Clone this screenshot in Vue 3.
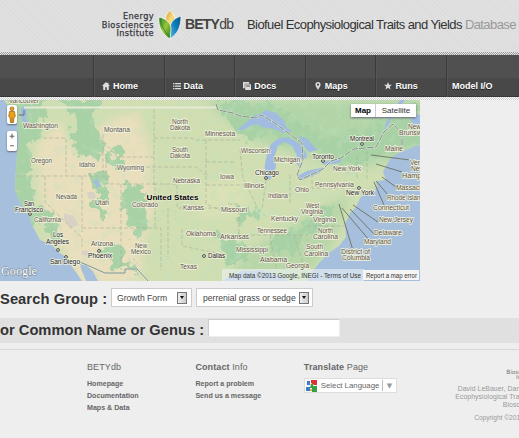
<script setup>
const nav = ['Home', 'Data', 'Docs', 'Maps', 'Runs', 'Model I/O']

// text, left x, baseline y, width
const states = [
  ['Vancouver', 9, 103, 30], ['Washington', 23, 128, 35], ['Montana', 104, 132, 26], ['Oregon', 31, 163, 21],
  ['Idaho', 79, 167, 16], ['Wyoming', 117, 170, 27], ['Nevada', 56, 199, 21], ['Utah', 95, 205, 14],
  ['Colorado', 132, 207, 26], ['California', 34, 222, 27], ['Arizona', 91, 246, 22],
  ['New', 135, 248, 12], ['Mexico', 131, 254, 20], ['North', 172, 124, 16], ['Dakota', 170, 130, 20],
  ['South', 172, 152, 16], ['Dakota', 170, 158, 20], ['Minnesota', 205, 136, 30], ['Wisconsin', 241, 153, 29],
  ['Nebraska', 173, 183, 27], ['Iowa', 220, 179, 14], ['Illinois', 244, 188, 20], ['Michigan', 274, 162, 26],
  ['Ohio', 295, 192, 14], ['Indiana', 268, 198, 20], ['Kansas', 183, 210, 21], ['Missouri', 221, 212, 26],
  ['Kentucky', 271, 221, 27], ['Tennessee', 257, 233, 30], ['Oklahoma', 186, 236, 30], ['Arkansas', 220, 239, 29],
  ['Mississippi', 236, 252, 32], ['Alabama', 260, 262, 27], ['Georgia', 286, 268, 23], ['Texas', 180, 269, 17],
  ['West', 306, 208, 13], ['Virginia', 301, 214, 22], ['Virginia', 313, 222, 23], ['North', 318, 233, 15],
  ['Carolina', 313, 239, 25], ['South', 306, 249, 17], ['Carolina', 304, 256, 24],
  ['Pennsylvania', 315, 187, 39], ['New York', 333, 171, 28], ['Maine', 385, 151, 18],
  ['New', 408, 129, 13], ['Brunswick', 399, 135, 31], ['Vermont', 410, 165, 25], ['New', 411, 171, 13],
  ['Hampshire', 402, 178, 35], ['Massachusetts', 396, 190, 45], ['Rhode Island', 387, 200, 37],
  ['Connecticut', 373, 210, 36], ['New Jersey', 379, 222, 34], ['Delaware', 374, 235, 28],
  ['Maryland', 364, 244, 27], ['District of', 341, 254, 29], ['Columbia', 342, 260, 28]
]
const cities = [
  ['San', 24, 206, 10], ['Francisco', 15, 212, 28], ['Los', 53, 237, 10], ['Angeles', 46, 244, 23],
  ['San Diego', 50, 264, 30], ['Phoenix', 88, 258, 24], ['Chicago', 255, 175, 24],
  ['Toronto', 312, 159, 22], ['Montreal', 350, 141, 24], ['Dallas', 208, 258, 17], ['New York', 346, 195, 28]
]
const dots = [[30, 214], [58, 250], [66, 257], [99, 251], [266, 178], [323, 161], [362, 144], [204, 256], [359, 188]]
</script>

<template>
  <main class="page">
    <header class="header">
      <div class="institute"><span>Energy</span><span class="bio">Biosciences</span><span>Institute</span></div>
      <svg class="logo" viewBox="0 0 24 30">
        <defs>
          <linearGradient id="gold" x1="0" y1="0" x2="1" y2="1"><stop stop-color="#d99a23"/><stop offset=".55" stop-color="#f8dd83"/><stop offset="1" stop-color="#d8a132"/></linearGradient>
          <linearGradient id="leaf" x1="0" y1="0" x2="1" y2="1"><stop stop-color="#277e32"/><stop offset=".5" stop-color="#9bc637"/><stop offset="1" stop-color="#28752c"/></linearGradient>
          <linearGradient id="blue" x1="0" y1="1" x2="1" y2="0"><stop stop-color="#5fb9df"/><stop offset=".5" stop-color="#1180be"/><stop offset="1" stop-color="#075583"/></linearGradient>
        </defs>
        <path d="M12 .5C8 4 7 8 8 11l4 7 5-8C17 6 15 3 12 .5Z" fill="url(#gold)" stroke="#fff" stroke-width=".7"/>
        <path d="M23 6c-6 2-10 5-11 11v12c7-5 11-11 11-23Z" fill="url(#blue)" stroke="#fff" stroke-width=".7"/>
        <path d="M1 7c8 2 12 6 12 12l-1 10C4 24 0 17 1 7Z" fill="url(#leaf)" stroke="#fff" stroke-width=".7"/>
        <path d="M2 9c2 8 5 13 10 18" fill="none" stroke="#2c8034" stroke-width=".8"/>
      </svg>
      <div class="brand"><b>BETY</b>db</div>
      <div class="title">Biofuel Ecophysiological Traits and Yields <span>Database</span></div>
    </header>
    <div class="dots top"></div>
    <nav class="nav">
      <a v-for="(item, i) in nav" :key="item">
        <svg v-if="i < 5" viewBox="0 0 9 9" class="ico">
          <path v-if="i === 0" d="M4.5 0 0 4.5h1.4V9h2.2V6h1.8v3h2.2V4.5H9L7.3 2.8V.8H6v.8Z"/>
          <path v-else-if="i === 1" d="M0 1h1.6v1.5H0zM2.3 1H9v1.5H2.3zM0 4h1.6v1.4H0zM2.3 4H9v1.4H2.3zM0 6.8h1.6v1.4H0zM2.3 6.8H9v1.4H2.3z"/>
          <path v-else-if="i === 2" fill-rule="evenodd" d="M0 0h7v2H2v5H0zM2.5 2.5H9V9H2.5zM3.5 4v1H8V4z"/>
          <path v-else-if="i === 3" fill-rule="evenodd" d="M4.5 0C2.7 0 1.6 1.2 1.6 3c0 2 1.7 3 2.9 6 1.2-3 2.9-4 2.9-6 0-1.8-1.1-3-2.9-3Zm0 1.8a1.2 1.2 0 1 1 0 2.4 1.2 1.2 0 0 1 0-2.4Z"/>
          <path v-else d="m4.5 0 1.2 3H9L6.5 5l.9 3.5-2.9-2-2.9 2L2.5 5 0 3h3.3Z"/>
        </svg>{{ item }}
      </a>
    </nav>
    <div class="dots bottom"></div>

    <section class="map">
      <svg class="terrain" viewBox="0 100 420 181">
        <defs>
          <filter id="soft" x="-20%" y="-20%" width="140%" height="140%"><feGaussianBlur stdDeviation="4"/></filter>
          <filter id="rough" x="-10%" y="-10%" width="120%" height="120%">
            <feTurbulence type="fractalNoise" baseFrequency=".09" numOctaves="4" seed="4"/>
            <feDisplacementMap in="SourceGraphic" scale="26" xChannelSelector="R" yChannelSelector="G"/>
          </filter>
          <filter id="mottle" x="0" y="0" width="100%" height="100%">
            <feTurbulence type="fractalNoise" baseFrequency=".11" numOctaves="4" seed="9"/>
            <feColorMatrix values="0 0 0 0 .52  0 0 0 0 .75  0 0 0 0 .54  7 0 0 0 -3.7"/>
          </filter>
          <clipPath id="land"><path d="M4 100 9 107 17 111 17 125 19 140 17 155 16 168 15 190 20 202 25 212 30 217 32 225 40 240 52 245 58 252 66 257 71 265 78 275 82 281H86L81 269 80 264 86 265 93 271 98 281H222L230 276 242 271 262 270 278 275 290 281H307L311 273 320 262 330 252 339 246 346 237 345 224 350 213 356 207 360 198 366 192 376 189 377 181 386 180 383 172 386 166 390 159 396 154 406 150 415 146 420 145V100Z"/></clipPath>
        </defs>
        <rect y="100" width="420" height="181" fill="#a5bfdd"/>
        <g clip-path="url(#land)">
          <rect y="100" width="420" height="181" fill="#d0deb2"/>
          <g filter="url(#soft)">
            <path d="M36 145 60 122 80 160 105 122 137 112 152 153 152 215 140 250 142 284H80L42 215Z" fill="#eadfbd"/>
            <path d="M205 100H420V155L350 170 300 155 250 138Z" fill="#b2d5a8"/>
            <path d="M250 250 285 230 323 206 350 195 330 250 300 281H225Z" fill="#b8d6a8"/>
            <path d="M195 185 250 175 245 215 200 220Z" fill="#d9e1b5"/>
          </g>
          <g filter="url(#rough)" fill="#a9d1a6">
            <path d="M0 98H48L44 125 30 145 32 190 45 222 35 230 10 200 8 110Z"/>
            <path d="M55 98H98L95 125 108 150 100 158 80 156 70 135 78 120Z"/>
            <path d="M38 205 56 215 62 238 50 240ZM108 155 120 148 128 165 117 170ZM125 185 145 190 150 225 135 238 122 208ZM92 170 108 175 104 220 96 205ZM100 245 125 250 138 272 110 266Z"/>
            <path d="M213 100 270 100 300 120 330 140 350 135 420 100V145L390 150 365 165 330 157 280 137 245 140Z"/>
            <path d="M270 245 305 220 335 200 330 215 305 243 280 255ZM215 235 245 240 250 265 225 260ZM235 210 250 204 260 215 240 222Z"/>
          </g>
          <rect y="100" width="420" height="181" filter="url(#mottle)" opacity=".24"/>
          <g fill="#d8d2c5"><path d="m64 213 9 3 6 9-9 4-6-10ZM82 250l7 1-2 5-6-2ZM87 192h7l2 6-7 1Z"/></g>
        </g>
        <g fill="#a2bce1">
          <path d="m21 108 4-2 2 5-1 8 4 5-5 1-4-8Zm72 73 4-3 3 8-3 2Z"/>
          <path d="m237 130 10-8 6-6 9-3 4-3 10 3 8 8 3 7 5 3-9 2-9-4-13-2-4-3-7 2-7 4Z"/>
          <path d="m267 154 4-10 7-5 13-2-9 6-4 3-3 9 1 11-2 9-5 5-5-5 1-11ZM281 137l11 2 8 5 6 9 1 5-6 1-2 8-4-6 2-6-5-9-11-6Zm18-1 7 2 12 12-9 2-7-8Z"/>
          <path d="m297 176 10-5 18-4-6 6-17 7Zm25-14 9-2 11-1-3 4-15 2ZM385 124l9-13 6-11h5l-12 16-8 14ZM411 118l7-4 2 1v10l-7 2Z"/>
        </g>
        <path d="M355 192 367 188 379 185 370 191 359 195Z" fill="#c7dcaf"/>
        <g fill="none" stroke="#a5ae98" stroke-width=".6" stroke-dasharray="4 2">
          <path d="M43 138 66 138V160 176M17 176H106M103 134V176M45 176V202L82 238V247M82 176V232M106 158V184H155V228M121 184V270M82 228H161V270M154 109V185M154 138H190L197 140H240M140 167H196L208 176M154 184H177V208H225M168 208V257M182 229V246L216 253M206 140V204L220 210M206 162H236M206 185H244M228 204 239 204V235M240 150 243 178 256 205M266 180 262 210M290 175V205M215 235H308M270 235 276 267M294 235 304 267M307 226H345M312 174V188H355M357 156V180M367 151 367 180M100 137 117 157H154"/>
        </g>
        <path d="M24 107.5H216" stroke="#e6e9d4" stroke-width="2"/>
        <g fill="none" stroke="#e6ecd9" stroke-width="2" stroke-opacity=".7"><path d="M216 104 218 110 233 113 240 116 256 118 262 115 276 124 288 133 302 143 303 160 297 175 300 180 323 169 331 161 341 158 354 149 376 147 384 132 393 124 402 134 402 147"/><path d="M80 262 105 273H125V269H137L150 283"/></g>
        <g fill="none" stroke="#7f8f89" stroke-width="1"><path d="M216 104 218 110 233 113 240 116 256 118 262 115 276 124 288 133 302 143 303 160 297 175 300 180 323 169 331 161 341 158 354 149 376 147 384 132 393 124 402 134 402 147" stroke-dasharray="7 1"/><path d="M80 262 105 273H125V269H137L150 283"/></g>
        <path d="M19 115h5v-5" fill="none" stroke="#667" stroke-width="1"/>
        <path d="m371 155 39 5M376 164l26 8M382 177l14 10M376 181l13 15M374 182l10 23M353 205l25 17M350 209l24 25M342 208l28 33M339 204l15 50" fill="none" stroke="#656654" stroke-width=".8"/>
        <path d="M222 269H364V281H222Z" fill="#eef4f7" opacity=".6"/>
        <g class="place"><text v-for="(s, i) in states" :key="i" :x="s[1]" :y="s[2]" :textLength="s[3]" lengthAdjust="spacingAndGlyphs">{{ s[0] }}</text></g>
        <g fill="#fff" stroke="#444" stroke-width="1"><circle v-for="(d, i) in dots" :key="i" :cx="d[0]" :cy="d[1]" r="1.4"/></g>
        <g class="place city"><text v-for="(s, i) in cities" :key="i" :x="s[1]" :y="s[2]" :textLength="s[3]" lengthAdjust="spacingAndGlyphs">{{ s[0] }}</text></g>
        <text class="country" x="146.5" y="200" textLength="52" lengthAdjust="spacingAndGlyphs">United States</text>
        <text class="google" x="1" y="275" textLength="36" lengthAdjust="spacingAndGlyphs">Google</text>
        <text class="legal" x="229" y="278" textLength="132" lengthAdjust="spacingAndGlyphs">Map data ©2013 Google, INEGI - Terms of Use</text>
        <path d="M363 270H419V280H363Z" fill="#f5f5f5"/>
        <text class="legal" x="366" y="278" textLength="51" lengthAdjust="spacingAndGlyphs">Report a map error</text>
      </svg>
      <div class="pegman"><svg viewBox="0 0 10 18"><g fill="#eaa018" stroke="#96610c" stroke-width=".7"><path d="M2.5 6h5l.8 5-1.300 1L6.500 17h-3L3 12l-1.300-1Z"/><circle cx="5" cy="3.3" r="1.900"/></g><path d="M5 12v5" stroke="#996213" stroke-width=".6"/></svg></div>
      <div class="zoom"><svg viewBox="0 0 10 20"><path d="M5 3v5M2.5 5.5h5M3 15.5h4" stroke="#666" stroke-width="1.2"/></svg></div>
      <div class="types"><b>Map</b><span>Satellite</span></div>
    </section>

    <section class="search">
      <h2>Search Group :</h2>
      <div class="select growth"><span>Growth Form</span><i></i></div>
      <div class="select grass"><span>perrenial grass or sedge</span><i></i></div>
    </section>
    <section class="common"><h2>or Common Name or Genus :</h2><input aria-label="Common name or genus"></section>
    <footer class="footer">
      <div class="col links"><h3>BETYdb</h3><a>Homepage</a><a>Documentation</a><a>Maps &amp; Data</a></div>
      <div class="col contact"><h3><b>Contact</b> Info</h3><a>Report a problem</a><a>Send us a message</a></div>
      <div class="col translate"><h3><b>Translate</b> Page</h3>
        <div class="language"><svg viewBox="0 0 11 12"><path fill="#f4f4f4" d="M0 0h11v12H0z"/><path fill="#da3331" d="M5 0h6v5H8L5 3z"/><path fill="#397cca" d="M1 1h3v4H1zM0 7h4v4H0z"/><path fill="#35a044" d="M5 4h2v2h4v6H6V8H4z"/><path fill="#eab835" d="M4 9h2v2H4z"/></svg><span>Select Language</span><i>▼</i></div>
      </div>
      <div class="credits">
        <div class="mini"><span>Energy</span><span>Biosciences</span><span>Institute</span></div>
        <div class="lines"><span>David LeBauer, Dan Wang</span><span>Ecophysiological Traits and</span><span>Biosciences</span></div>
        <div class="copy">Copyright ©2013</div>
      </div>
    </footer>
  </main>
</template>

<style>
body { background: #eee; overflow: hidden; }
</style>
<style scoped>
* { box-sizing: border-box; }
.page { width: 519px; height: 438px; overflow: hidden; background: #eee; color: #333; font-family: "Liberation Sans", Arial, sans-serif; }
.header { height: 52px; display: flex; white-space: nowrap; background: repeating-linear-gradient(45deg, #dcdcdc 0 1px, #e0e0e0 1px 3px); }
.institute { width: 154px; padding-top: 12px; display: flex; flex-direction: column; align-items: flex-end; font: 8.2px/8.7px "DejaVu Sans", sans-serif; letter-spacing: .4px; color: #383840; -webkit-text-stroke: .25px; }
.logo { width: 24px; height: 30px; margin: 10px 0 0 4px; }
.brand { margin: 16px 0 0 3px; width: 62px; font-size: 14px; line-height: 17px; letter-spacing: -.8px; color: #444; }
.title { margin-top: 17px; font-size: 13px; line-height: 16px; letter-spacing: -.58px; color: #333; }
.title span { color: #999; }
.dots { height: 3px; background: conic-gradient(#999 25%, #e7e7e7 0 50%, #999 0 75%, #e7e7e7 0) 0 0 / 2px 2px; }
.dots.bottom { background: conic-gradient(#ccc 25%, #fff 0 50%, #ccc 0 75%, #fff 0) 0 0 / 2px 2px; }
.nav { height: 42px; padding-left: 93px; display: flex; background: linear-gradient(#505050 0 23px, #484848 23px 41px, #383838 41px); }
.nav a { flex: 0 0 70.6px; height: 42px; padding: 19px 0 0 8px; display: flex; align-items: center; color: #fff; font-weight: bold; font-size: 9px; white-space: nowrap; border-left: 1px solid #3b3b3b; box-shadow: inset 1px 0 #555; text-shadow: 0 1px #222; }
.nav a:last-child { padding-left: 5px; }
.ico { width: 8px; height: 8px; margin-right: 3px; fill: #ddd; }
.map { width: 420px; height: 181px; position: relative; }
.terrain { display: block; width: 420px; height: 181px; }
.place { font: 6.8px "Liberation Sans", sans-serif; fill: #5d5145; stroke: #f0f1df; stroke-width: 1.6px; paint-order: stroke; }
.city { fill: #222; }
.country { font: bold 8px "Liberation Sans", sans-serif; fill: #000; stroke: #f0f1df; stroke-width: 1px; paint-order: stroke; }
.google { font: 12px "Liberation Serif", serif; fill: #fff; stroke: #748491; stroke-width: 1px; paint-order: stroke; }
.legal { font: 6.3px "Liberation Sans", sans-serif; fill: #333; }
.pegman, .zoom, .types { position: absolute; background: #fff; border-radius: 2px; box-shadow: 0 1px 2px #667; }
.pegman { left: 7px; top: 5px; width: 10px; height: 19px; }
.zoom { left: 7px; top: 31px; width: 10px; height: 20px; }
.pegman svg, .zoom svg { display: block; width: 10px; height: 19px; }
.types { left: 351px; top: 4px; width: 65px; height: 13px; display: flex; font-size: 8px; line-height: 14px; border-radius: 0; }
.types b { width: 25px; text-align: center; border-right: 1px solid #ccc; color: #000; }
.types span { flex: 1; text-align: center; }
h2 { margin: 0; font-size: 14.7px; white-space: nowrap; color: #333; }
.search { height: 37px; padding-top: 7px; display: flex; }
.search h2 { width: 111px; line-height: 22px; letter-spacing: .08px; }
.select { height: 19px; display: flex; align-items: center; justify-content: space-between; border: 1px solid #ccc; background: #fff; color: #444; font-size: 8.6px; white-space: nowrap; }
.growth { width: 81px; padding: 0 4px 0 5px; margin-right: 4px; }
.grass { width: 117px; padding: 0 3px 0 6px; }
.select i { width: 10px; height: 12px; flex: none; border: 1px solid #777; background: linear-gradient(90deg, #eee, #ccc); display: grid; place-items: center; }
.select i::before { content: ""; border: 2px solid transparent; border-top: 3px solid #111; border-bottom: 0; }
.common { height: 25px; background: #e0e0e0; display: flex; }
.common h2 { width: 208px; line-height: 25px; }
.common input { width: 132px; height: 18px; margin-top: 1px; padding: 0; border: 1px solid #ccc; border-right-color: #eee; border-bottom-color: #eee; border-radius: 0; background: #fff; }
.footer { height: 89px; margin-top: 6px; padding-left: 87px; border-top: 1px solid #d8d8d8; display: flex; color: #666; white-space: nowrap; }
.col { width: 108.4px; flex: none; padding-top: 12px; }
h3 { margin: 0 0 5px; font: 9px/11px "Liberation Sans", sans-serif; letter-spacing: .1px; }
.col a { display: block; font-size: 7.1px; line-height: 12px; font-weight: bold; }
.language { width: 93px; height: 15px; margin-top: 2px; padding-left: 1px; display: flex; align-items: center; background: #fff; border: 1px solid #ddd; font-size: 7.8px; }
.language svg { width: 11px; height: 12px; margin-right: 4px; }
.language span { width: 62px; border-right: 1px solid #bbb; line-height: 11px; }
.language i { font: 7px "DejaVu Sans", sans-serif; color: #999; margin-left: 4px; }
.credits { width: 128px; flex: none; padding-top: 14px; color: #999; font-size: 6.6px; }
.mini { display: flex; flex-direction: column; align-items: flex-end; font: 5.8px/5.7px "DejaVu Sans", sans-serif; color: #777; }
.lines { margin-top: 4px; display: flex; flex-direction: column; align-items: flex-end; line-height: 8px; font-size: 6.9px; letter-spacing: .05px; }
.copy { margin-top: 5px; padding-left: 62px; line-height: 8px; }
</style>
